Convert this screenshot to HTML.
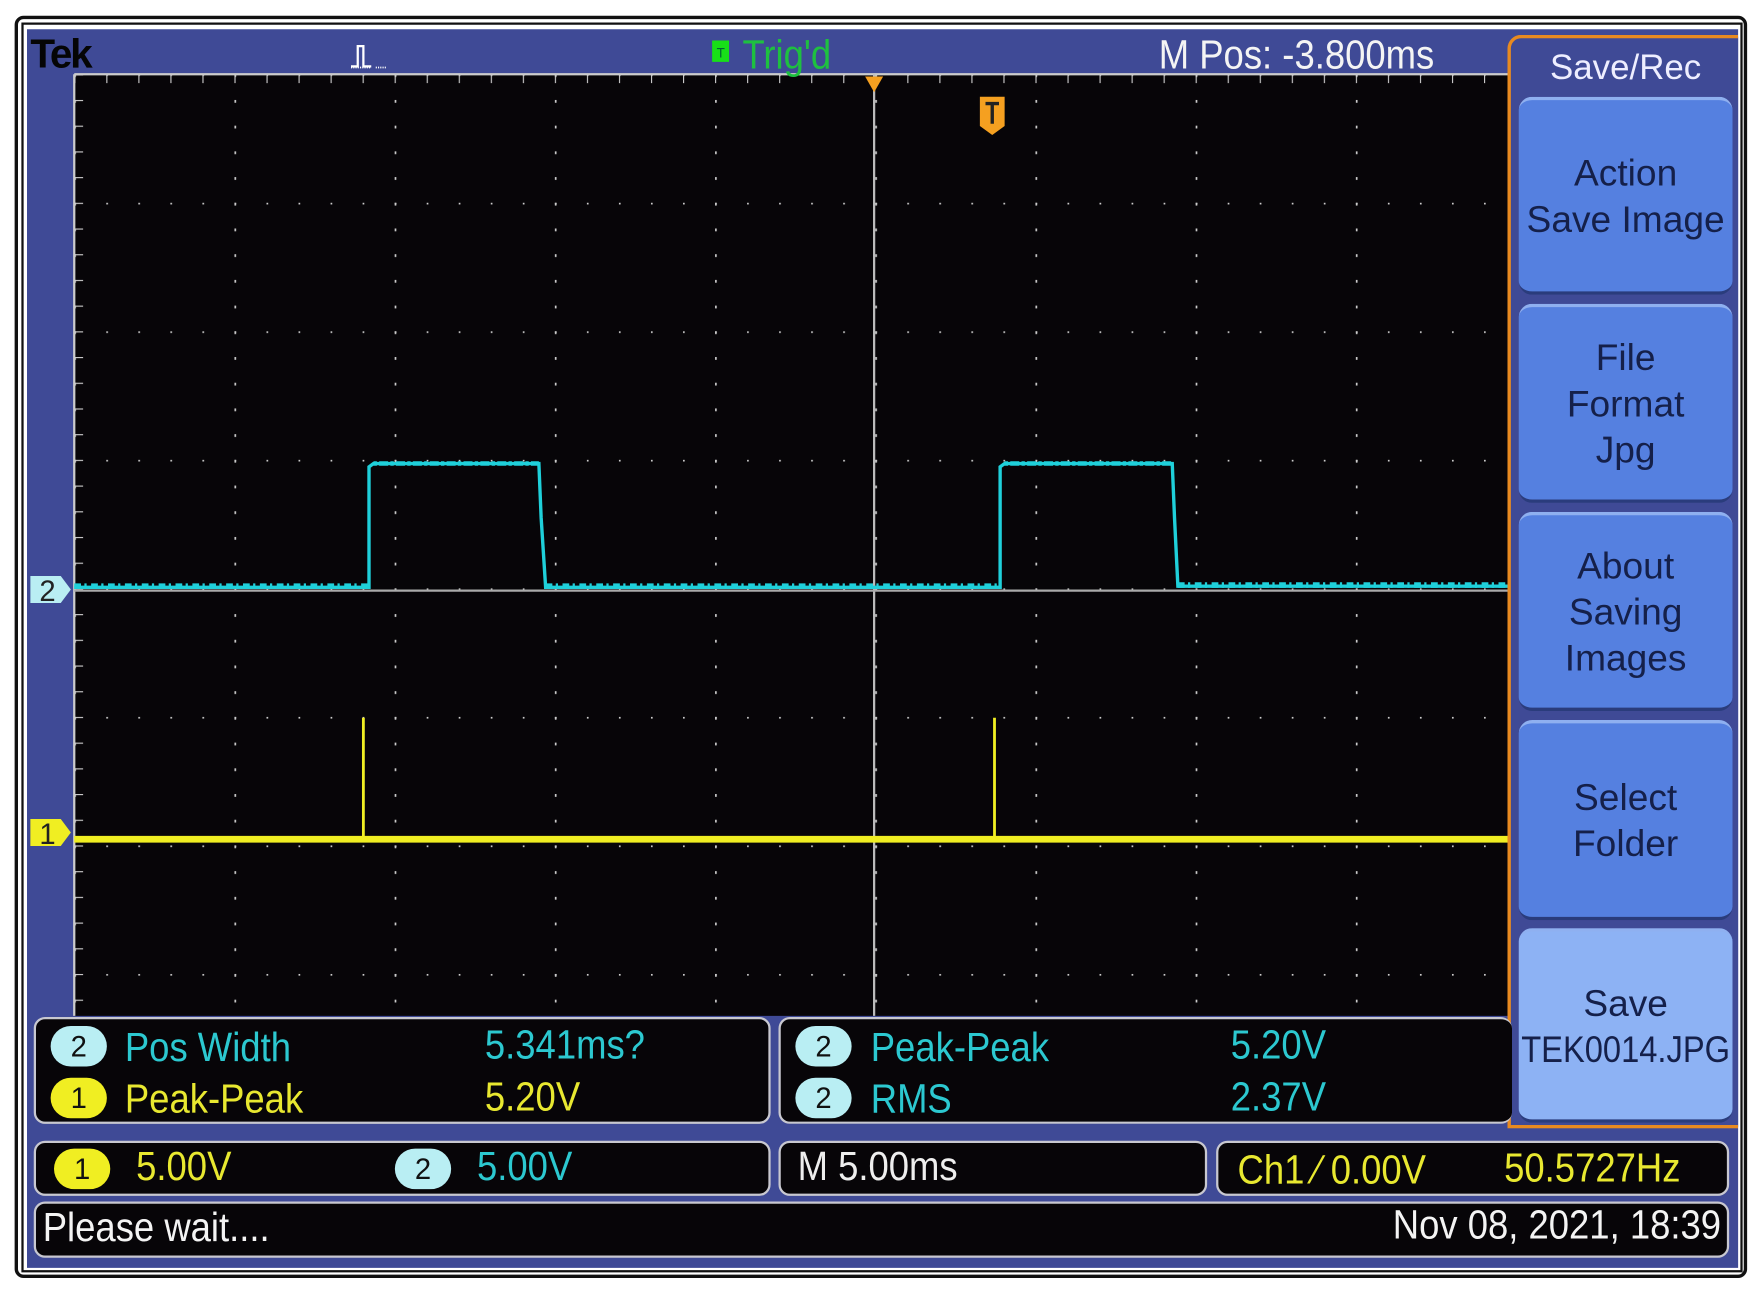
<!DOCTYPE html>
<html><head><meta charset="utf-8"><style>
html,body{margin:0;padding:0;background:#fff;width:1764px;height:1296px;overflow:hidden}
#w{position:absolute;left:0;top:0;width:1568px;height:1152px;transform:scale(1.125);transform-origin:0 0;font-family:"Liberation Sans",sans-serif}
.a{position:absolute}
.t{position:absolute;white-space:nowrap;transform-origin:0 0;transform:scaleX(0.9)}
.box{position:absolute;background:#070508;border:2px solid #c8c8d0;border-radius:10px;box-sizing:border-box}
.btn{position:absolute;left:1350px;width:190px;background:#5580e0;border-radius:12px;border-top:3px solid #8fb0f0;border-bottom:3px solid #2a3c7c;box-sizing:border-box;color:#15204a;font-size:33px;text-align:center;line-height:41px;display:flex;flex-direction:column;justify-content:center}
.bd{position:absolute;width:50px;height:36px;border-radius:18px;text-align:center;font-size:26px;line-height:36px;color:#111}
</style></head><body><div id="w">
<div class="a" style="left:13px;top:14px;width:1540px;height:1122px;border:3px solid #111;border-radius:8px;box-sizing:border-box"></div>
<div class="a" style="left:19px;top:20px;width:1530px;height:1111px;border:2px solid #111;box-sizing:border-box"></div>
<div class="a" style="left:24px;top:26px;width:1521px;height:1101px;background:#3f4a96"></div>
<svg class="a" style="left:0;top:0" width="1568" height="1152">
<defs>
<pattern id="pv" x="66" y="66" width="142.4" height="22.85" patternUnits="userSpaceOnUse"><rect x="-1" y="0" width="2.5" height="2.5" fill="#ccc"/></pattern>
<pattern id="ph" x="66" y="66" width="28.48" height="114.25" patternUnits="userSpaceOnUse"><rect x="-1" y="-1" width="2.5" height="2.5" fill="#ccc"/></pattern>
<pattern id="tk" x="66" y="66" width="28.48" height="10" patternUnits="userSpaceOnUse"><rect x="-1" y="0" width="2" height="8" fill="#ccc"/></pattern>
<pattern id="tl" x="66" y="66" width="10" height="22.85" patternUnits="userSpaceOnUse"><rect x="0" y="-1" width="8" height="2" fill="#ccc"/></pattern>
</defs>
<rect x="66" y="66" width="1274" height="837" fill="#070508"/>
<rect x="66" y="66" width="1274" height="837" fill="url(#pv)"/>
<rect x="66" y="66" width="1274" height="837" fill="url(#ph)"/>
<rect x="66" y="66" width="1274" height="8" fill="url(#tk)"/>
<rect x="66" y="66" width="8" height="837" fill="url(#tl)"/>
<line x1="66" y1="66" x2="1340" y2="66" stroke="#ccc" stroke-width="2"/>
<line x1="66" y1="66" x2="66" y2="903" stroke="#ccc" stroke-width="2"/>
<line x1="777" y1="66" x2="777" y2="903" stroke="#bbb" stroke-width="2"/>
<line x1="66" y1="525" x2="1340" y2="525" stroke="#aaa" stroke-width="2"/>
<path d="M66 522 H328 V415 L332 412 H479 L481 460 L485 522 H889 V415 L893 412 H1042 L1044 460 L1047 521 H1340" fill="none" stroke="#1fd0da" stroke-width="3"/>
<path d="M66 521 H328 M485 521 H889 M1047 520 H1340" stroke="#1fd0da" stroke-width="5" stroke-dasharray="6 3 2 4"/>
<path d="M332 412 H479 M893 412 H1042" stroke="#1fd0da" stroke-width="4" stroke-dasharray="3 2 8 2"/>
<path d="M66 746 H1340" stroke="#f0ee22" stroke-width="6"/>
<path d="M323 746 V638 M884 746 V638" stroke="#f0ee22" stroke-width="2.5"/>
<path d="M769 68 H785 L777 82 Z" fill="#f5a020"/>
<path d="M871 86 H893 V112 L882 120 L871 112 Z" fill="#f5a020"/>
<path d="M876 92 H888 M882 92 V110" stroke="#222" stroke-width="3"/>
<path d="M27 512 H54 L63 524 L54 536 H27 Z" fill="#b9eef3"/>
<text x="35" y="534" font-size="26" fill="#222" font-family="Liberation Sans">2</text>
<path d="M27 728 H54 L63 740 L54 752 H27 Z" fill="#f0ee22"/>
<text x="35" y="750" font-size="26" fill="#222" font-family="Liberation Sans">1</text>
<path d="M312 59 H318 V41 H323 V59 H330" stroke="#fff" stroke-width="2" fill="none"/>
<path d="M312 60 h18 M334 60 h10" stroke="#fff" stroke-width="1.5" stroke-dasharray="1 1"/>
<rect x="633" y="36" width="15" height="19" fill="#18e018"/>
<text x="637" y="51" font-size="12" fill="#063">T</text>
</svg>
<div class="t" style="left:27px;top:27px;font-size:36px;font-weight:bold;color:#050505;letter-spacing:-2px;transform:none">Tek</div>
<div class="t" style="left:660px;top:28px;font-size:36px;color:#1ec040">Trig'd</div>
<div class="t" style="left:1030px;top:28px;font-size:36px;color:#f4f4f4">M Pos: -3.800ms</div>
<div class="a" style="left:1340px;top:31px;width:205px;height:972px;border:3px solid #e88a20;border-right:none;border-radius:12px 0 0 0;box-sizing:border-box;background:#3f4a96"></div>
<div class="a" style="left:1345px;top:42px;width:200px;text-align:center;font-size:31px;color:#eef">Save/Rec</div>
<div class="btn" style="top:86px;height:176px">Action<br>Save Image</div>
<div class="btn" style="top:270px;height:177px">File<br>Format<br>Jpg</div>
<div class="btn" style="top:455px;height:177px">About<br>Saving<br>Images</div>
<div class="btn" style="top:640px;height:178px">Select<br>Folder</div>
<div class="btn" style="top:825px;height:173px;background:#8db2f4">Save<br><span style="display:inline-block;transform:scaleX(0.88);margin-left:-12px;margin-right:-12px">TEK0014.JPG</span></div>
<div class="box" style="left:30px;top:904px;width:655px;height:95px"></div>
<div class="box" style="left:692px;top:904px;width:652px;height:95px;border-right:none"></div>
<div class="bd" style="left:45px;top:912px;background:#b9eef3">2</div>
<div class="bd" style="left:45px;top:958px;background:#f0ee22">1</div>
<div class="bd" style="left:707px;top:912px;background:#b9eef3">2</div>
<div class="bd" style="left:707px;top:958px;background:#b9eef3">2</div>
<div class="t" style="left:111px;top:910px;font-size:36px;color:#2cc8d0">Pos Width</div>
<div class="t" style="left:431px;top:908px;font-size:36px;color:#2cc8d0">5.341ms?</div>
<div class="t" style="left:111px;top:956px;font-size:36px;color:#e8e830">Peak-Peak</div>
<div class="t" style="left:431px;top:954px;font-size:36px;color:#e8e830">5.20V</div>
<div class="t" style="left:774px;top:910px;font-size:36px;color:#2cc8d0">Peak-Peak</div>
<div class="t" style="left:1094px;top:908px;font-size:36px;color:#2cc8d0">5.20V</div>
<div class="t" style="left:774px;top:956px;font-size:36px;color:#2cc8d0">RMS</div>
<div class="t" style="left:1094px;top:954px;font-size:36px;color:#2cc8d0">2.37V</div>
<div class="box" style="left:30px;top:1014px;width:655px;height:49px"></div>
<div class="box" style="left:692px;top:1014px;width:381px;height:49px"></div>
<div class="box" style="left:1081px;top:1014px;width:456px;height:49px"></div>
<div class="bd" style="left:48px;top:1021px;background:#f0ee22">1</div>
<div class="bd" style="left:351px;top:1021px;background:#b9eef3">2</div>
<div class="t" style="left:121px;top:1016px;font-size:36px;color:#e8e830">5.00V</div>
<div class="t" style="left:424px;top:1016px;font-size:36px;color:#2cc8d0">5.00V</div>
<div class="t" style="left:709px;top:1016px;font-size:36px;color:#eee">M 5.00ms</div>
<div class="t" style="left:1100px;top:1019px;font-size:36px;color:#e8e830">Ch1 ⁄ 0.00V</div>
<div class="t" style="left:1337px;top:1017px;font-size:36px;color:#e8e830">50.5727Hz</div>
<div class="box" style="left:30px;top:1068px;width:1507px;height:50px"></div>
<div class="t" style="left:38px;top:1070px;font-size:36px;color:#f4f4f4">Please wait....</div>
<div class="t" style="left:1238px;top:1068px;font-size:36px;color:#f4f4f4">Nov 08, 2021, 18:39</div>
</div></body></html>
